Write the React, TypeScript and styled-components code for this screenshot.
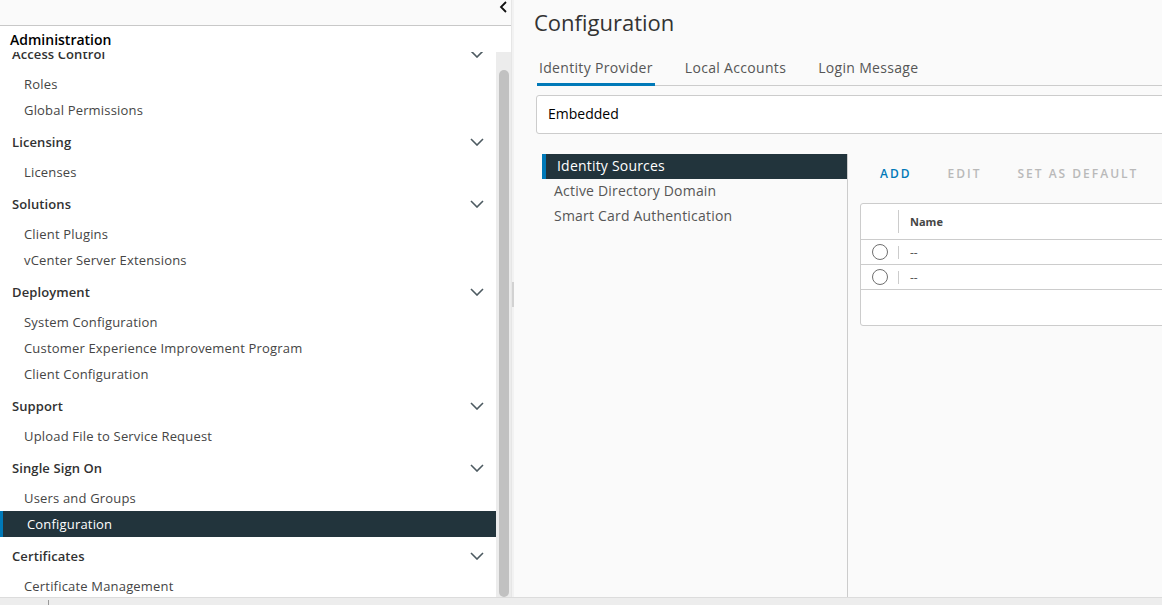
import React from "react";
import styled, { createGlobalStyle, css } from "styled-components";

const GlobalStyle = createGlobalStyle`
  html, body {
    margin: 0;
    height: 100%;
    overflow: hidden;
    background: #fafafa;
  }
  body {
    font-family: "Open Sans", "Liberation Sans", sans-serif;
    color: #333;
  }
  * { box-sizing: border-box; }
`;

type NavEntry = { label: string; items: string[] };

const nav: NavEntry[] = [
  { label: "Access Control", items: ["Roles", "Global Permissions"] },
  { label: "Licensing", items: ["Licenses"] },
  { label: "Solutions", items: ["Client Plugins", "vCenter Server Extensions"] },
  {
    label: "Deployment",
    items: ["System Configuration", "Customer Experience Improvement Program", "Client Configuration"],
  },
  { label: "Support", items: ["Upload File to Service Request"] },
  { label: "Single Sign On", items: ["Users and Groups", "Configuration"] },
  { label: "Certificates", items: ["Certificate Management"] },
];

const ChevronDown = () => (
  <svg width="14" height="8" viewBox="0 0 14 8">
    <path d="M1 1l6 6 6-6" fill="none" stroke="#4d5a61" strokeWidth="1.6" />
  </svg>
);

const ChevronLeft = () => (
  <svg width="8" height="12" viewBox="0 0 8 12">
    <path d="M7 1L2 6l5 5" fill="none" stroke="#111" strokeWidth="1.8" />
  </svg>
);

export default function App() {
  return (
    <Page>
      <GlobalStyle />
      <Workspace>
        <Sidebar>
          <SidebarTop>
            <ChevronLeft />
          </SidebarTop>
          <SidebarTitle>Administration</SidebarTitle>
          <SidebarBody>
            <NavScroll>
              <NavList>
                {nav.map((group) => (
                  <div key={group.label}>
                    <GroupHeader>
                      <span>{group.label}</span>
                      <ChevronDown />
                    </GroupHeader>
                    {group.items.map((item) => (
                      <NavItem key={item} $active={group.label === "Single Sign On" && item === "Configuration"}>
                        {item}
                      </NavItem>
                    ))}
                  </div>
                ))}
              </NavList>
            </NavScroll>
            <ScrollTrack>
              <ScrollThumb />
            </ScrollTrack>
          </SidebarBody>
        </Sidebar>
        <Splitter>
          <Grip />
        </Splitter>
        <Main>
          <Title>Configuration</Title>
          <Tabs>
            <Tab $active>Identity Provider</Tab>
            <Tab>Local Accounts</Tab>
            <Tab>Login Message</Tab>
          </Tabs>
          <ProviderBox>Embedded</ProviderBox>
          <Split>
            <VerticalNav>
              <VNavLink $active>Identity Sources</VNavLink>
              <VNavLink>Active Directory Domain</VNavLink>
              <VNavLink>Smart Card Authentication</VNavLink>
            </VerticalNav>
            <Detail>
              <ActionBar>
                <FlatButton>ADD</FlatButton>
                <FlatButton $disabled>EDIT</FlatButton>
                <FlatButton $disabled>SET AS DEFAULT</FlatButton>
              </ActionBar>
              <Grid>
                <GridHeader>
                  <SelectCell>
                    <ColSep $tall />
                  </SelectCell>
                  <HeaderLabel>Name</HeaderLabel>
                </GridHeader>
                {[0, 1].map((i) => (
                  <GridRow key={i}>
                    <SelectCell>
                      <Radio />
                      <ColSep />
                    </SelectCell>
                    <Cell>--</Cell>
                  </GridRow>
                ))}
                <GridFooter />
              </Grid>
            </Detail>
          </Split>
        </Main>
      </Workspace>
      <StatusBar>
        <StatusTick />
      </StatusBar>
    </Page>
  );
}

const Page = styled.div`
  height: 605px;
  display: flex;
  flex-direction: column;
  overflow: hidden;
`;

const Workspace = styled.div`
  flex: 1;
  min-height: 0;
  display: flex;
`;

const Sidebar = styled.aside`
  width: 511px;
  flex-shrink: 0;
  display: flex;
  flex-direction: column;
  background: #fff;
`;

const SidebarTop = styled.div`
  height: 26px;
  flex-shrink: 0;
  background: #fafafa;
  border-bottom: 1px solid #c8c8c8;
  display: flex;
  justify-content: flex-end;
  align-items: flex-start;
  padding: 1px 4px 0 0;
`;

const SidebarTitle = styled.div`
  height: 26px;
  flex-shrink: 0;
  padding: 5px 0 0 10px;
  font-size: 14px;
  font-weight: 600;
  color: #000;
  line-height: 18px;
`;

const SidebarBody = styled.div`
  flex: 1;
  min-height: 0;
  display: flex;
`;

const NavScroll = styled.div`
  width: 496px;
  overflow: hidden;
`;

const NavList = styled.div`
  margin-top: -17px;
`;

const GroupHeader = styled.div`
  height: 36px;
  display: flex;
  align-items: center;
  justify-content: space-between;
  padding: 2px 12px 0 12px;
  font-size: 13px;
  font-weight: 600;
  letter-spacing: 0.1px;
  color: #313131;
`;

const NavItem = styled.div<{ $active?: boolean }>`
  height: 26px;
  display: flex;
  align-items: center;
  padding-left: 24px;
  font-size: 13px;
  letter-spacing: 0.18px;
  color: #454545;
  ${(p) =>
    p.$active &&
    css`
      background: #22343c;
      color: #fff;
      border-left: 3px solid #0079b8;
      padding-left: 24px;
    `}
`;

const ScrollTrack = styled.div`
  width: 15px;
  background: #ececec;
  display: flex;
  padding: 18px 2px 0 3px;
`;

const ScrollThumb = styled.div`
  flex: 1;
  background: #c1c1c1;
  border-radius: 5px;
`;

const Splitter = styled.div`
  width: 3px;
  flex-shrink: 0;
  background: #f2f2f2;
  border-left: 1px solid #e6e6e6;
  padding-top: 282px;
`;

const Grip = styled.div`
  width: 2px;
  height: 25px;
  background: #d2d2d2;
`;

const Main = styled.main`
  flex: 1;
  min-width: 0;
  overflow: hidden;
  background: #fafafa;
  padding-left: 20px;
  display: flex;
  flex-direction: column;
`;

const Title = styled.h1`
  margin: 8px 0 0;
  font-size: 22px;
  line-height: 28px;
  font-weight: 400;
  color: #333;
`;

const Tabs = styled.div`
  margin: 19px 0 0 3px;
  width: 700px;
  display: flex;
  gap: 28px;
  border-bottom: 1px solid #ccc;
`;

const Tab = styled.div<{ $active?: boolean }>`
  height: 31px;
  padding: 3px 2px 0;
  font-size: 14px;
  line-height: 20px;
  letter-spacing: 0.32px;
  color: #565656;
  border-bottom: 3px solid ${(p) => (p.$active ? "#0079b8" : "transparent")};
  margin-bottom: -1px;
`;

const ProviderBox = styled.div`
  margin: 9px 0 0 2px;
  width: 700px;
  height: 39px;
  flex-shrink: 0;
  background: #fff;
  border: 1px solid #ccc;
  border-radius: 3px;
  display: flex;
  align-items: center;
  padding: 0 0 2px 11px;
  font-size: 14px;
  color: #000;
`;

const Split = styled.div`
  flex: 1;
  display: flex;
  margin: 20px 0 0 8px;
`;

const VerticalNav = styled.nav`
  width: 306px;
  flex-shrink: 0;
  border-right: 1px solid #ccc;
`;

const VNavLink = styled.div<{ $active?: boolean }>`
  height: 25px;
  display: flex;
  align-items: center;
  padding: 0 0 2px 12px;
  font-size: 14px;
  letter-spacing: 0.2px;
  color: #565656;
  ${(p) =>
    p.$active &&
    css`
      background: #22343c;
      color: #fff;
      border-left: 4px solid #0079b8;
      padding-left: 11px;
    `}
`;

const Detail = styled.div`
  padding-left: 12px;
  width: 400px;
  flex-shrink: 0;
`;

const ActionBar = styled.div`
  height: 38px;
  display: flex;
  align-items: center;
  gap: 12px;
  padding-left: 8px;
`;

const FlatButton = styled.span<{ $disabled?: boolean }>`
  padding: 0 12px;
  font-size: 12px;
  font-weight: 600;
  letter-spacing: 2px;
  color: ${(p) => (p.$disabled ? "#b9b9b9" : "#0079b8")};
`;

const Grid = styled.div`
  margin-top: 11px;
  width: 400px;
  background: #fff;
  border: 1px solid #ccc;
  border-radius: 3px;
`;

const GridHeader = styled.div`
  height: 36px;
  display: flex;
  align-items: center;
  border-bottom: 1px solid #ccc;
`;

const SelectCell = styled.div`
  width: 38px;
  height: 100%;
  display: flex;
  align-items: center;
  justify-content: flex-end;
  gap: 4px;
`;

const ColSep = styled.div<{ $tall?: boolean }>`
  width: 1px;
  height: ${(p) => (p.$tall ? "23px" : "13px")};
  background: #ccc;
`;

const HeaderLabel = styled.div`
  padding-left: 11px;
  font-size: 11px;
  font-weight: 700;
  color: #454545;
`;

const GridRow = styled.div`
  height: 25px;
  display: flex;
  align-items: center;
  border-bottom: 1px solid #ccc;
  &:last-of-type {
    border-bottom: 3px solid #cfcfcf;
  }
`;

const Radio = styled.div`
  width: 16px;
  height: 16px;
  border-radius: 50%;
  border: 1px solid #6f6f6f;
  background: #fff;
  margin-right: 6px;
`;

const Cell = styled.div`
  padding-left: 11px;
  font-size: 12px;
  color: #565656;
`;

const GridFooter = styled.div`
  height: 35px;
`;

const StatusBar = styled.footer`
  height: 8px;
  flex-shrink: 0;
  background: #ededed;
  border-top: 1px solid #dcdcdc;
  padding-left: 48px;
`;

const StatusTick = styled.div`
  width: 1px;
  height: 100%;
  margin-top: 2px;
  background: #999;
`;
